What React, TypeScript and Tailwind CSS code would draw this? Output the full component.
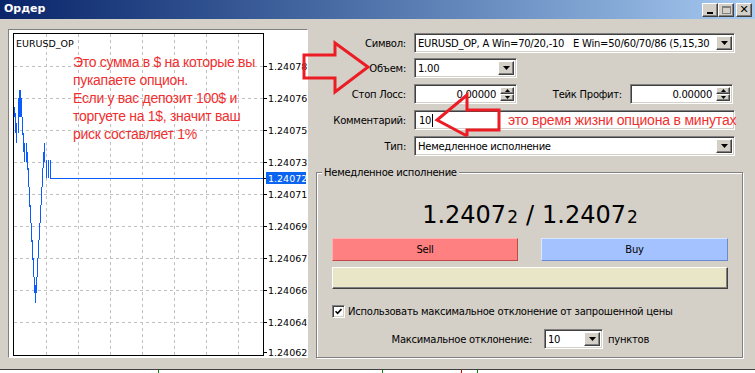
import React from "react";

const ui = { fontFamily: '"DejaVu Sans", "Liberation Sans", sans-serif' };
const red = { fontFamily: '"Liberation Sans", Arial, sans-serif' };

const bars: [number, number, number][] = [
  [14, 107, 117], [15, 113, 133], [16, 123, 143], [18, 98, 133], [19, 90, 117],
  [20, 90, 117], [21, 98, 117], [22, 117, 135], [23, 133, 152], [24, 143, 162],
  [26, 143, 162], [27, 152, 170], [28, 168, 187], [29, 187, 207],
  [30, 205, 223], [31, 223, 242], [32, 240, 260], [33, 258, 277], [34, 277, 293],
  [35, 285, 303], [36, 277, 293], [37, 258, 277], [38, 240, 258], [39, 223, 240],
  [40, 205, 223], [41, 187, 205], [42, 168, 187], [43, 152, 168], [44, 143, 162],
  [46, 160, 178], [48, 160, 178], [50, 160, 178],
];

const gridY = [66, 98, 130, 162, 194, 226, 258, 290, 322];
const gridX = [46, 78, 110, 142, 174, 206, 238];
const labels: [number, string][] = [
  [66, "1.24078"], [98, "1.24076"], [130, "1.24075"], [162, "1.24073"], [194, "1.24071"],
  [226, "1.24069"], [258, "1.24067"], [290, "1.24066"], [322, "1.24064"], [352, "1.24062"],
];

const sunken =
  "border border-t-[#808080] border-l-[#808080] border-b-white border-r-white shadow-[inset_1px_1px_0_#404040,inset_-1px_-1px_0_#d4d0c8] bg-white";
const raised =
  "border border-t-white border-l-white border-b-[#404040] border-r-[#404040] shadow-[inset_-1px_-1px_0_#808080] bg-[#d4d0c8]";

function DownArrow() {
  return (
    <div className={`${raised} w-[16px] h-full flex items-center justify-center shrink-0`}>
      <svg width="7" height="4" viewBox="0 0 7 4">
        <path d="M0 0h7L3.5 4z" fill="#000" />
      </svg>
    </div>
  );
}

function Combo({ value, w }: { value: string; w: string }) {
  return (
    <div className={`${sunken} ${w} h-[20px] flex items-stretch p-[2px] shrink-0`}>
      <div className="flex-1 flex items-center pl-[1px] text-[10px] text-black whitespace-pre overflow-hidden">
        {value}
      </div>
      <DownArrow />
    </div>
  );
}

function Spin({ value }: { value: string }) {
  return (
    <div className={`${sunken} w-[103px] h-[20px] flex items-stretch p-[2px] shrink-0`}>
      <div className="flex-1 flex items-center justify-end pr-[4px] text-[10px] text-black">{value}</div>
      <div className="flex flex-col w-[14px]">
        <div className={`${raised} flex-1 flex items-center justify-center`}>
          <svg width="5" height="3" viewBox="0 0 5 3">
            <path d="M0 3h5L2.5 0z" fill="#000" />
          </svg>
        </div>
        <div className={`${raised} flex-1 flex items-center justify-center`}>
          <svg width="5" height="3" viewBox="0 0 5 3">
            <path d="M0 0h5L2.5 3z" fill="#000" />
          </svg>
        </div>
      </div>
    </div>
  );
}

function Label({ children, w = "w-[106px]" }: { children: React.ReactNode; w?: string }) {
  return <div className={`${w} text-right pr-[8px] text-[10px] text-black shrink-0`}>{children}</div>;
}

function TitleButton({ children, dim }: { children: React.ReactNode; dim?: boolean }) {
  return (
    <div className={`${raised} w-[16px] h-[14px] flex items-center justify-center ${dim ? "text-[#808080]" : "text-black"}`}>
      {children}
    </div>
  );
}

function Chart() {
  return (
    <svg width="298" height="327" viewBox="9 30 298 327" className="block">
      {gridX.map((x) => (
        <line key={x} x1={x + 0.5} y1={34} x2={x + 0.5} y2={355} stroke="#c0c0c0" strokeDasharray="3 3" />
      ))}
      {gridY.map((y) => (
        <line key={y} x1={14} y1={y + 0.5} x2={263} y2={y + 0.5} stroke="#c0c0c0" strokeDasharray="3 3" />
      ))}
      <rect x={13.5} y={33.5} width={250} height={322} fill="none" stroke="#000" />
      {labels.map(([y, t]) => (
        <g key={t}>
          <line x1={264} y1={y + 0.5} x2={267} y2={y + 0.5} stroke="#000" />
          <text x={268} y={y + 4} fontSize="9.5" fill="#000" style={ui}>
            {t}
          </text>
        </g>
      ))}
      <line x1={264} y1={178.5} x2={267} y2={178.5} stroke="#000" />
      <rect x={266} y={172} width={40} height={12} fill="#0a64f0" />
      <text x={268} y={182} fontSize="9.5" fill="#fff" style={ui}>
        1.24072
      </text>
      {bars.map(([x, a, b], i) => (
        <line key={i} x1={x + 0.5} y1={a} x2={x + 0.5} y2={b} stroke="#0b5cff" strokeWidth="1" />
      ))}
      <line x1={50} y1={178.5} x2={263} y2={178.5} stroke="#0b5cff" strokeWidth="1.2" />
      <text x={16} y={47} fontSize="9.5" fill="#000" style={ui}>
        EURUSD_OP
      </text>
    </svg>
  );
}

export default function App() {
  return (
    <div className="relative w-[755px] h-[373px] overflow-hidden bg-white tracking-[-0.25px]" style={ui}>
      <div className="h-[370px] flex flex-col bg-[#d4d0c8] border-b border-b-[#404040]">
        {/* title bar */}
        <div className="h-[19px] flex items-center justify-between pl-[4px] pr-[3px] bg-gradient-to-r from-[#0a246a] to-[#a6caf0] shrink-0 tracking-normal">
          <span className="text-white font-bold text-[11px]">Ордер</span>
          <div className="flex items-center">
            <TitleButton>
              <div className="w-[6px] h-[2px] bg-black mt-[6px]" />
            </TitleButton>
            <TitleButton dim>
              <div className="w-[9px] h-[8px] border border-[#808080] border-t-2" />
            </TitleButton>
            <div className="ml-[2px]">
              <TitleButton>
                <span className="text-[11px] font-bold leading-none">✕</span>
              </TitleButton>
            </div>
          </div>
        </div>

        <div className="flex pt-[10px]">
          {/* chart panel */}
          <div className="ml-[8px] w-[300px] h-[329px] border border-t-[#808080] border-l-[#808080] border-b-white border-r-white bg-white shrink-0 tracking-normal">
            <Chart />
          </div>

          {/* form */}
          <div className="flex flex-col pt-[4px]">
            <div className="flex items-center h-[20px]">
              <Label>Символ:</Label>
              <Combo w="w-[321px]" value="EURUSD_OP, A Win=70/20,-10   E Win=50/60/70/86 (5,15,30" />
            </div>
            <div className="flex items-center h-[20px] mt-[5px]">
              <Label>Объем:</Label>
              <Combo w="w-[103px]" value="1.00" />
            </div>
            <div className="flex items-center h-[20px] mt-[6px]">
              <Label>Стоп Лосс:</Label>
              <Spin value="0.00000" />
              <Label w="w-[113px]">Тейк Профит:</Label>
              <Spin value="0.00000" />
            </div>
            <div className="flex items-center h-[20px] mt-[6px]">
              <Label>Комментарий:</Label>
              <div className={`${sunken} w-[321px] h-[20px] flex items-center pl-[4px] text-[10px] text-black`}>
                10<span className="w-[1px] h-[13px] bg-black ml-[1px]" />
              </div>
            </div>
            <div className="flex items-center h-[20px] mt-[6px]">
              <Label>Тип:</Label>
              <Combo w="w-[321px]" value="Немедленное исполнение" />
            </div>

            {/* group box */}
            <div className="relative ml-[8px] mt-[16px] w-[427px] h-[186px] border border-[#808080] shadow-[inset_1px_1px_0_white,1px_1px_0_white] flex flex-col pl-[15px] pr-[14px]">
              <span className="absolute -top-[7px] left-[5px] px-[2px] bg-[#d4d0c8] text-[10px] text-black leading-[13px]">
                Немедленное исполнение
              </span>
              <div className="mt-[24px] h-[30px] flex items-baseline justify-center text-black tracking-normal">
                <span className="text-[24px]">1.2407</span>
                <span className="text-[17px] ml-[1px]">2</span>
                <span className="text-[24px] mx-[8px]">/</span>
                <span className="text-[24px]">1.2407</span>
                <span className="text-[17px] ml-[1px]">2</span>
              </div>
              <div className="flex mt-[11px] h-[23px] gap-[23px]">
                <div className="w-[186px] bg-[#ff8080] border border-t-[#ffb0b0] border-l-[#ffb0b0] border-b-[#c04848] border-r-[#c04848] flex items-center justify-center text-[10px] text-black">
                  Sell
                </div>
                <div className="w-[187px] bg-[#a4c2ff] border border-t-[#d8e6ff] border-l-[#d8e6ff] border-b-[#6a8ad0] border-r-[#6a8ad0] flex items-center justify-center text-[10px] text-black">
                  Buy
                </div>
              </div>
              <div className="mt-[6px] h-[22px] w-[396px] bg-[#e8e6c6] border border-t-white border-l-white border-b-[#404040] border-r-[#404040] shadow-[inset_-1px_-1px_0_#808080]" />
              <div className="flex items-center mt-[16px] h-[13px]">
                <div className={`${sunken} w-[13px] h-[13px] flex items-center justify-center shrink-0`}>
                  <svg width="7" height="7" viewBox="0 0 7 7">
                    <path d="M0.5 3.2 L2.6 5.4 L6.5 1" fill="none" stroke="#000" strokeWidth="1.6" />
                  </svg>
                </div>
                <span className="ml-[3px] text-[10px] text-black whitespace-nowrap">
                  Использовать максимальное отклонение от запрошенной цены
                </span>
              </div>
              <div className="flex items-center mt-[11px] h-[20px]">
                <div className="w-[212px] text-right text-[10px] text-black pr-[12px] shrink-0">Максимальное отклонение:</div>
                <Combo w="w-[59px]" value="10" />
                <span className="ml-[5px] text-[10px] text-black">пунктов</span>
              </div>
            </div>
          </div>
        </div>
      </div>

      {/* taskbar ticks below window */}
      <div className="flex h-[3px]">
        <div className="ml-[158px] w-[1px] bg-[#008000]" />
        <div className="ml-[223px] w-[1px] bg-[#008000]" />
        <div className="ml-[78px] w-[1px] bg-[#e00000]" />
        <div className="ml-[15px] w-[1px] bg-[#008000]" />
      </div>

      {/* annotations drawn over the screenshot */}
      <div className="absolute left-[73px] top-[53px] text-[14px] leading-[18px] tracking-[-0.3px] text-[#f03030] pointer-events-none" style={red}>
        Это сумма в $ на которые вы
        <br />
        пукапаете опцион.
        <br />
        Если у вас депозит 100$ и
        <br />
        торгуете на 1$, значит ваш
        <br />
        риск составляет 1%
      </div>
      <div className="absolute left-[508px] top-[111px] text-[14px] leading-[18px] tracking-[-0.2px] text-[#f03030] whitespace-nowrap pointer-events-none" style={red}>
        это время жизни опциона в минутах
      </div>
      <svg className="absolute left-0 top-0 pointer-events-none" width="755" height="373" viewBox="0 0 755 373">
        <polygon points="304,55 335,55 335,43 368,67 335,92 335,78 304,78" fill="none" stroke="#ec1c24" strokeWidth="3" />
        <polyline points="467,136 437,120 467,95 467,110 499,110 499,130 467,130 467,136" fill="none" stroke="#ec1c24" strokeWidth="3" />
      </svg>
    </div>
  );
}
